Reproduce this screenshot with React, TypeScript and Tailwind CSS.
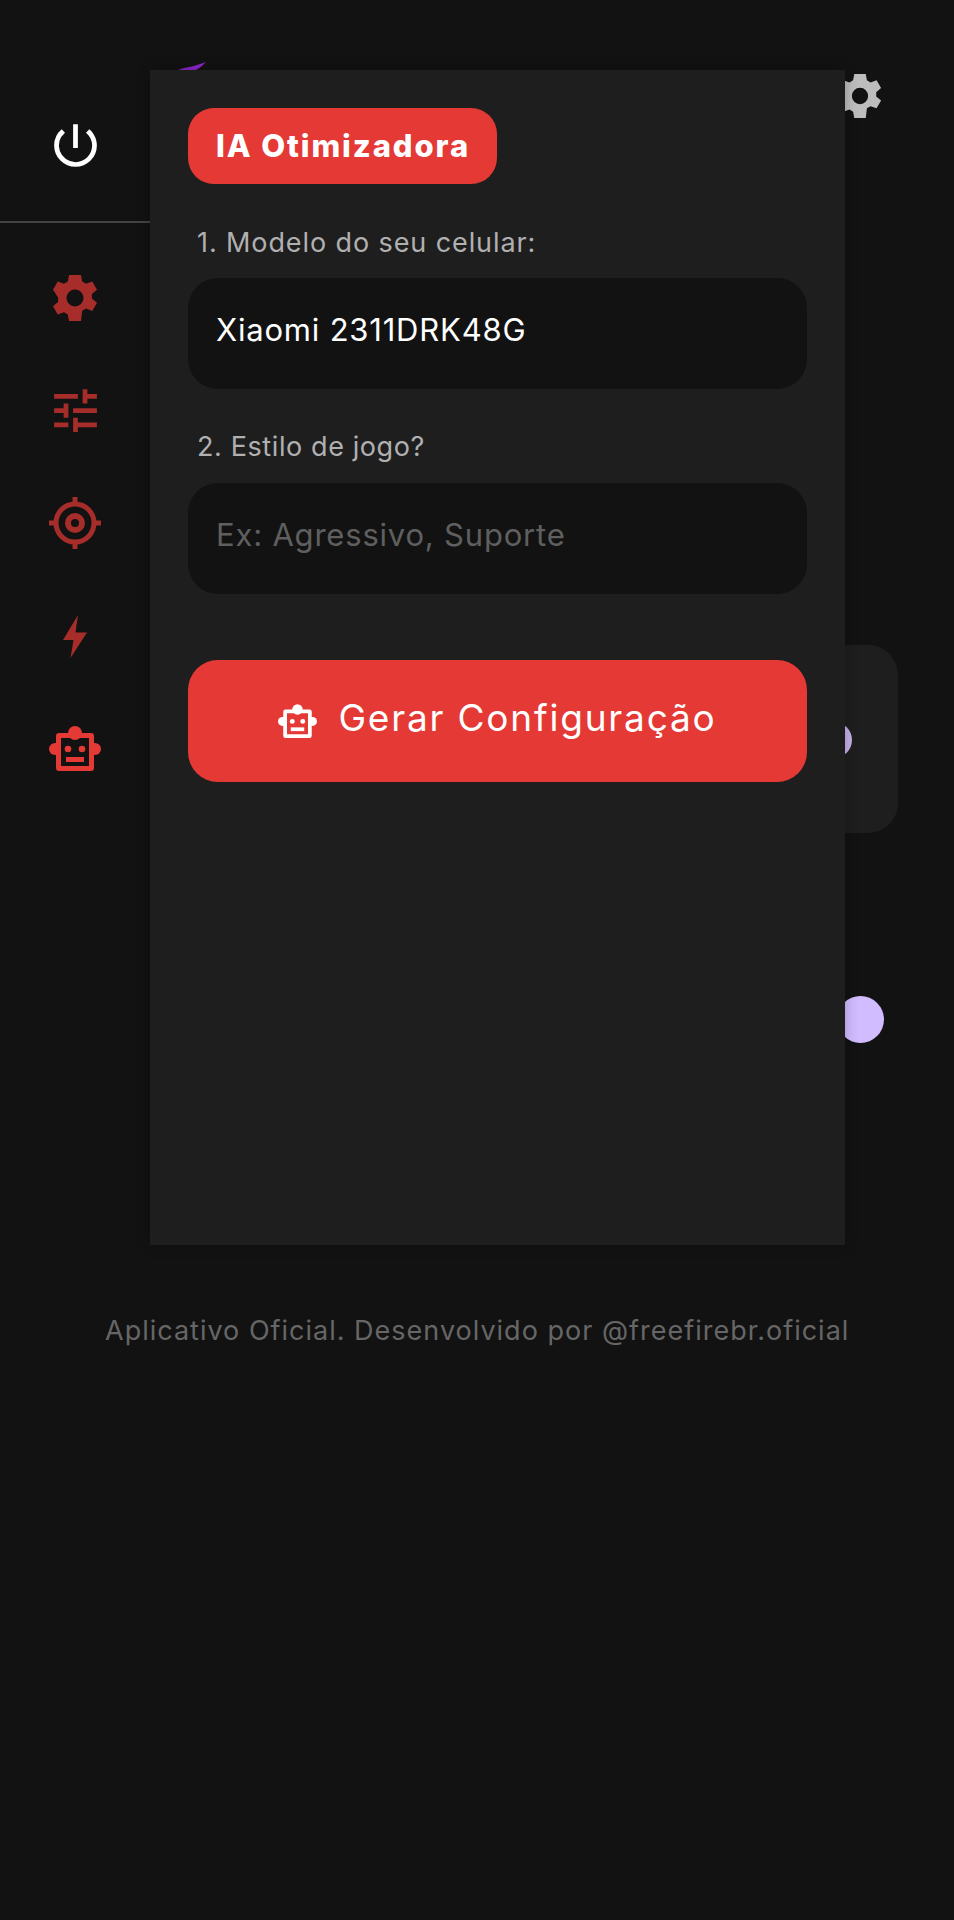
import { MdPowerSettingsNew, MdTune } from "react-icons/md";

const font = { fontFamily: "Inter" };

function Gear({ className }: { className?: string }) {
  return (
    <svg viewBox="0 0 44 48" className={className} fill="currentColor">
      <path
        fillRule="evenodd"
        d="M16 1h12l1.200 6.600 3.800 2.200 6.300-2.300 4.700 8.200-5.100 4.300v4.400l5.100 4.300-4.700 8.200-6.300-2.300-3.800 2.200L28 47H16l-1.200-6.600-3.800-2.200-6.300 2.300L0 32.300l5.100-4.300v-4.400L0 15.700 4.700 7.500 11 9.800l3.800-2.200zM22 15.500a8.500 8.500 0 1 0 0 17 8.500 8.500 0 0 0 0-17z"
      />
    </svg>
  );
}

function Target({ className }: { className?: string }) {
  return (
    <svg viewBox="0 0 52 52" className={className} fill="none" stroke="currentColor">
      <circle cx="26" cy="26" r="19" strokeWidth="5" />
      <circle cx="26" cy="26" r="7" strokeWidth="6" />
      <path d="M26 0v8M26 44v8M0 26h8M44 26h8" strokeWidth="5" />
    </svg>
  );
}

function Bolt({ className }: { className?: string }) {
  return (
    <svg viewBox="0 0 24 43" className={className} fill="currentColor">
      <path d="M15 0 L12.500 17.500 L24 17.500 L7.500 43 L10.500 25 L0 25 Z" />
    </svg>
  );
}

function Robot({ className }: { className?: string }) {
  return (
    <svg viewBox="0 0 52 45" className={className} fill="currentColor">
      <circle cx="26" cy="7" r="7" />
      <circle cx="6" cy="23" r="6" />
      <circle cx="46" cy="23" r="6" />
      <path
        fillRule="evenodd"
        d="M10 7h32a3 3 0 0 1 3 3v32a3 3 0 0 1-3 3H10a3 3 0 0 1-3-3V10a3 3 0 0 1 3-3zM12 12v28h28V12z"
      />
      <circle cx="19" cy="23" r="3.300" />
      <circle cx="33" cy="23" r="3.300" />
      <rect x="17" y="31" width="18" height="5" />
    </svg>
  );
}

function NavIcon({ children }: { children: React.ReactNode }) {
  return <div className="flex h-[112.5px] w-full items-center justify-center">{children}</div>;
}

export default function App() {
  return (
    <div className="flex min-h-[1920px] flex-col bg-[#121212]" style={font}>
      <div className="relative mt-[70px] flex h-[1175px] w-[845px]">
        {/* screen behind the open panel */}
        <Gear className="absolute left-[838px] top-[3px] h-[46px] w-[44px] text-[#bdbdbd]" />
        <svg viewBox="0 0 30 8" className="absolute left-[176px] top-[-8px] h-2 w-[30px] text-[#8a25c4]" fill="currentColor">
          <path d="M30 0 C22 3 15 5 8 6 L2 8 L20 8 C24 6 27 3 30 0 Z" />
        </svg>
        <div className="absolute left-[800px] top-[575px] h-[188px] w-[98px] rounded-[30px] bg-[#1e1e1e]" />
        <div className="absolute left-[816px] top-[652px] h-[36px] w-[36px] rounded-full bg-[#c4b2e8]" />
        <div className="absolute left-[837px] top-[926px] h-[47px] w-[47px] rounded-full bg-[#d0bcff]" />

        <aside className="relative flex w-[150px] shrink-0 flex-col items-center bg-[#121212]">
          <div className="flex h-[153px] w-full items-center justify-center border-b-2 border-[#444444]">
            <MdPowerSettingsNew className="h-[57px] w-[57px] text-white" />
          </div>
          <div className="flex w-full flex-col pt-[19px]">
            <NavIcon>
              <Gear className="h-[48px] w-[44px] text-[#e53935] opacity-70" />
            </NavIcon>
            <NavIcon>
              <MdTune className="h-[57px] w-[57px] text-[#e53935] opacity-70" />
            </NavIcon>
            <NavIcon>
              <Target className="h-[52px] w-[52px] text-[#e53935] opacity-70" />
            </NavIcon>
            <NavIcon>
              <Bolt className="mt-[2px] h-[43px] w-[24px] text-[#e53935] opacity-70" />
            </NavIcon>
            <NavIcon>
              <Robot className="h-[45px] w-[52px] text-[#e53935]" />
            </NavIcon>
          </div>
        </aside>

        <main className="relative flex w-[695px] flex-col items-start bg-[#1e1e1e] px-[38px] pt-[38px] shadow-[0_0_12px_rgba(0,0,0,0.25)]">
          <div className="flex h-[76px] w-[309px] items-center rounded-[26px] bg-[#e53935] pl-[28px] text-[31px] font-extrabold tracking-[1.9px] text-white">
            IA Otimizadora
          </div>
          <label className="mt-[40px] pl-[9px] text-[27px] leading-[38px] tracking-[0.9px] text-[#b0b0b0]">1. Modelo do seu celular:</label>
          <div className="mt-[16px] flex h-[111px] w-[619px] items-center rounded-[30px] bg-[#121212] pb-[6px] pl-[28px] text-[31px] tracking-[0.8px] text-white">
            Xiaomi 2311DRK48G
          </div>
          <label className="mt-[39px] pl-[9px] text-[27px] leading-[38px] tracking-[0.6px] text-[#b0b0b0]">2. Estilo de jogo?</label>
          <div className="mt-[17px] flex h-[111px] w-[619px] items-center rounded-[30px] bg-[#121212] pb-[6px] pl-[28px] text-[31px] tracking-[0.8px] text-[#5f5f5f]">
            Ex: Agressivo, Suporte
          </div>
          <button className="mt-[66px] flex h-[122px] w-[619px] items-center justify-center gap-[21px] rounded-[30px] bg-[#e53935] text-[37px] tracking-[1.8px] text-white">
            <Robot className="h-[34px] w-[39px]" />
            <span className="mb-[6px]">Gerar Configuração</span>
          </button>
        </main>
      </div>
      <p className="mt-[68px] pl-[105px] text-[27px] leading-[36px] tracking-[1px] text-[#666666]">
        Aplicativo Oficial. Desenvolvido por @freefirebr.oficial
      </p>
    </div>
  );
}
